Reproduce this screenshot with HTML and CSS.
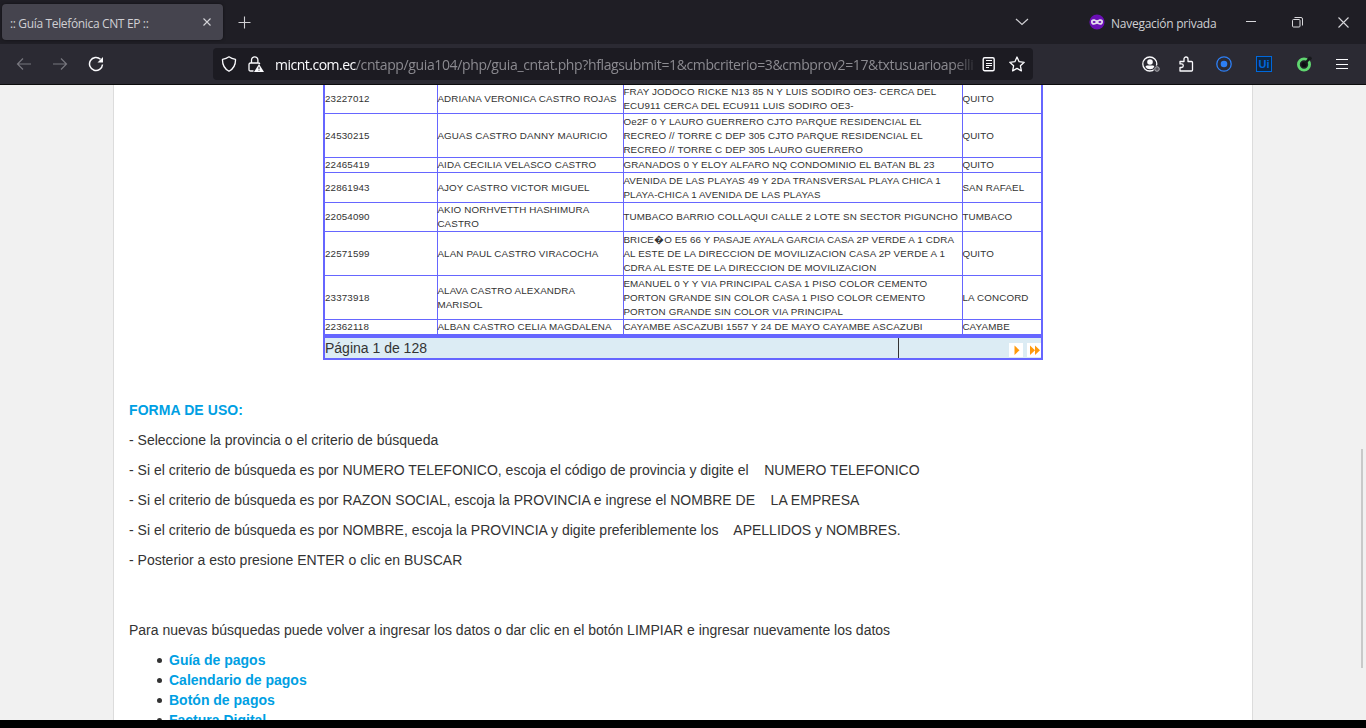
FILE: index.html
```html
<!DOCTYPE html>
<html lang="es">
<head>
<meta charset="utf-8">
<title>:: Guía Telefónica CNT EP ::</title>
<link rel="stylesheet" href="styles.css">
</head>
<body>
<header class="titlebar">
  <div class="tab"><span class="tab-title">:: Guía Telefónica CNT EP ::</span>
    <svg class="tab-close" width="10" height="10" viewBox="0 0 10 10"><path d="M1.500 1.500l7 7M8.500 1.500l-7 7" stroke="#d4d4d8" stroke-width="1.100" fill="none"/></svg>
  </div>
  <svg class="new-tab" width="13" height="13" viewBox="0 0 13 13"><path d="M6.500 .5v12M.5 6.500h12" stroke="#d0d0d4" stroke-width="1.100"/></svg>
  <svg class="all-tabs" width="14" height="8" viewBox="0 0 14 8"><path d="M1 1l6 5.500L13 1" stroke="#d0d0d4" stroke-width="1.200" fill="none"/></svg>
  <svg class="mask" width="16" height="16" viewBox="0 0 16 16"><circle cx="8" cy="8" r="7.600" fill="#6a0fb5"/><path d="M4.500 5.300c1.600 0 2.500.7 3.500 1 1-.3 1.900-1 3.500-1 1.800 0 2.600 1.200 2.500 2.600-.1 1.800-1.200 2.900-2.700 2.900-1.700 0-2.500-1-3.300-1s-1.600 1-3.300 1C3.200 10.800 2.100 9.700 2 7.900 1.900 6.500 2.700 5.300 4.500 5.300z" fill="#e4dcee"/><ellipse cx="5.100" cy="8" rx="1.500" ry="1" fill="#6a0fb5"/><ellipse cx="10.900" cy="8" rx="1.500" ry="1" fill="#6a0fb5"/></svg>
  <span class="private">Navegación privada</span>
  <div class="window-buttons">
    <svg width="10" height="10" viewBox="0 0 10 10"><path d="M0 4.500h10" stroke="#d8d8dc"/></svg>
    <svg width="11" height="11" viewBox="0 0 11 11"><rect x=".5" y="2.500" width="7.500" height="7.500" rx="1" fill="none" stroke="#d8d8dc"/><path d="M2.500.5H9q1.500 0 1.500 1.500v6.500" fill="none" stroke="#d8d8dc"/></svg>
    <svg width="11" height="11" viewBox="0 0 11 11"><path d="M.5.5l10 10M10.500.5l-10 10" stroke="#d8d8dc" stroke-width="1.100"/></svg>
  </div>
</header>
<nav class="toolbar">
  <div class="nav-buttons">
    <svg width="16" height="16" viewBox="0 0 16 16"><path d="M15 8H1.500M7 2.500L1.500 8 7 13.500" fill="none" stroke="#77767e" stroke-width="1.200"/></svg>
    <svg width="16" height="16" viewBox="0 0 16 16"><path d="M1 8h13.500M9 2.500L14.500 8 9 13.500" fill="none" stroke="#77767e" stroke-width="1.200"/></svg>
    <svg width="16" height="16" viewBox="0 0 16 16"><path d="M12.500 3.300A6.500 6.500 0 1 0 14.500 8.500" fill="none" stroke="#fbfbfe" stroke-width="1.500"/><path d="M15 1v5.500H9.500z" fill="#fbfbfe"/></svg>
  </div>
  <div class="urlbar">
    <svg class="shield" width="16" height="16" viewBox="0 0 16 16"><path d="M8 .8c2 1.500 4 2.200 6.500 2.600.2 5-1.300 9-6.500 11.900C2.800 12.400 1.300 8.400 1.500 3.400 4 3 6 2.300 8 .8z" fill="none" stroke="#fbfbfe" stroke-width="1.300" stroke-linejoin="round"/></svg>
    <svg class="lock" width="16" height="16" viewBox="0 0 16 16"><path d="M3.500 7V4a3.200 3.200 0 0 1 6.400 0v3M5.500 15H2.500q-1.500 0-1.500-1.500V8.500Q1 7 2.500 7h8q1 0 1.300 1" fill="none" stroke="#fbfbfe" stroke-width="1.300"/><path d="M11 8l5 8H6z" fill="#fbfbfe"/><path d="M11 10.800v2.200M11 13.700v1" stroke="#1c1b22"/></svg>
    <span class="url"><b>micnt.com.ec</b>/cntapp/guia104/php/guia_cntat.php?hflagsubmit=1&amp;cmbcriterio=3&amp;cmbprov2=17&amp;txtusuarioapelli</span>
    <svg class="reader" width="14" height="16" viewBox="0 0 14 16"><rect x="1.200" y="1.700" width="11" height="13" rx="1.500" fill="none" stroke="#fbfbfe" stroke-width="1.400"/><path d="M4 4.500h6M4 7.500h6M4 9.500h6M4 11.500h3" stroke="#fbfbfe"/></svg>
    <svg class="star" width="16" height="16" viewBox="0 0 16 16"><path d="M8 1l2.100 4.700 5.100.6-3.800 3.500 1 5.100L8 12.400l-4.400 2.500 1-5.100L.8 6.300l5.100-.6z" fill="none" stroke="#fbfbfe" stroke-width="1.300" stroke-linejoin="round"/></svg>
  </div>
  <div class="extensions">
    <svg class="account" width="18" height="16" viewBox="0 0 18 16"><circle cx="7.800" cy="8" r="7" fill="none" stroke="#fbfbfe" stroke-width="1.300"/><circle cx="8" cy="6" r="2.800" fill="#fbfbfe"/><path d="M3.500 11q0-1.500 1.500-1.500h6q1.500 0 1.500 1.500-1.500 2.300-4.500 2.300T3.500 11z" fill="#fbfbfe"/><circle cx="15" cy="13" r="3.500" fill="#2b2a33"/><circle cx="15" cy="13" r="2.300" fill="#55545c" stroke="#aaa9af"/></svg>
    <svg class="puzzle" width="16" height="16" viewBox="0 0 16 16"><path d="M2 5.500h4V3a2 2 0 0 1 4 0v2.500h3.500q1 0 1 1V14q0 1-1 1H2v-3.500h1.500a1.800 1.800 0 0 0 0-3.600H2z" fill="none" stroke="#fbfbfe" stroke-width="1.300" stroke-linejoin="round"/></svg>
    <svg width="16" height="16" viewBox="0 0 16 16"><circle cx="8" cy="8" r="7.200" fill="none" stroke="#2d7ff5" stroke-width="1.300"/><circle cx="8" cy="8" r="3.300" fill="#2d7ff5"/></svg>
    <span class="ui-badge">Ui</span>
    <svg width="16" height="16" viewBox="0 0 16 16"><circle cx="8" cy="8.500" r="5.600" fill="#202226" stroke="#60d670" stroke-width="2.800"/><circle cx="8" cy="8.500" r="2.600" fill="#0c0d10"/><path d="M9 7.500L13 3" stroke="#17191c" stroke-width="2.600"/><circle cx="13.800" cy="2.300" r="1.900" fill="#17191c"/></svg>
    <svg width="12" height="12" viewBox="0 0 12 12"><path d="M0 1.500h12M0 6.500h12M0 10.500h12" stroke="#fbfbfe" stroke-width="1.200"/></svg>
  </div>
</nav>
<main class="viewport">
  <div class="page">
    <div class="directory">
      <div class="row r28"><div>23227012</div><div>ADRIANA VERONICA CASTRO ROJAS</div><div>FRAY JODOCO RICKE N13 85 N Y LUIS SODIRO OE3- CERCA DEL<br>ECU911 CERCA DEL ECU911 LUIS SODIRO OE3-</div><div>QUITO</div></div>
      <div class="row r43"><div>24530215</div><div>AGUAS CASTRO DANNY MAURICIO</div><div>Oe2F 0 Y LAURO GUERRERO CJTO PARQUE RESIDENCIAL EL<br>RECREO // TORRE C DEP 305 CJTO PARQUE RESIDENCIAL EL<br>RECREO // TORRE C DEP 305 LAURO GUERRERO</div><div>QUITO</div></div>
      <div class="row r14"><div>22465419</div><div>AIDA CECILIA VELASCO CASTRO</div><div>GRANADOS 0 Y ELOY ALFARO NQ CONDOMINIO EL BATAN BL 23</div><div>QUITO</div></div>
      <div class="row r29"><div>22861943</div><div>AJOY CASTRO VICTOR MIGUEL</div><div>AVENIDA DE LAS PLAYAS 49 Y 2DA TRANSVERSAL PLAYA CHICA 1<br>PLAYA-CHICA 1 AVENIDA DE LAS PLAYAS</div><div>SAN RAFAEL</div></div>
      <div class="row r28"><div>22054090</div><div>AKIO NORHVETTH HASHIMURA<br>CASTRO</div><div>TUMBACO BARRIO COLLAQUI CALLE 2 LOTE SN SECTOR PIGUNCHO</div><div>TUMBACO</div></div>
      <div class="row r43"><div>22571599</div><div>ALAN PAUL CASTRO VIRACOCHA</div><div>BRICE&#xFFFD;O E5 66 Y PASAJE AYALA GARCIA CASA 2P VERDE A 1 CDRA<br>AL ESTE DE LA DIRECCION DE MOVILIZACION CASA 2P VERDE A 1<br>CDRA AL ESTE DE LA DIRECCION DE MOVILIZACION</div><div>QUITO</div></div>
      <div class="row r43"><div>23373918</div><div>ALAVA CASTRO ALEXANDRA<br>MARISOL</div><div>EMANUEL 0 Y Y VIA PRINCIPAL CASA 1 PISO COLOR CEMENTO<br>PORTON GRANDE SIN COLOR CASA 1 PISO COLOR CEMENTO<br>PORTON GRANDE SIN COLOR VIA PRINCIPAL</div><div>LA CONCORD</div></div>
      <div class="row r14"><div>22362118</div><div>ALBAN CASTRO CELIA MAGDALENA</div><div>CAYAMBE ASCAZUBI 1557 Y 24 DE MAYO CAYAMBE ASCAZUBI</div><div>CAYAMBE</div></div>
      <div class="pager">
        <div class="pager-label">Página 1 de 128</div>
        <div class="pager-links">
          <svg width="14" height="14" viewBox="0 0 14 14"><path fill="#fff" d="M0 0h14v14H0z"/><path d="M5.500 2.500l5 4.800-5 4.700z" fill="#ff9a0c"/></svg>
          <svg width="14" height="14" viewBox="0 0 14 14"><path fill="#fff" d="M0 0h14v14H0z"/><path d="M3 2.500l5 4.800L3 12zM8 2.500l5 4.800L8 12z" fill="#ff9a0c"/></svg>
        </div>
      </div>
    </div>
    <section class="help">
      <h2>FORMA DE USO:</h2>
      <p>- Seleccione la provincia o el criterio de búsqueda</p>
      <p>- Si el criterio de búsqueda es por NUMERO TELEFONICO, escoja el código de provincia y digite el &nbsp;&nbsp; NUMERO TELEFONICO</p>
      <p>- Si el criterio de búsqueda es por RAZON SOCIAL, escoja la PROVINCIA e ingrese el NOMBRE DE &nbsp;&nbsp; LA EMPRESA</p>
      <p>- Si el criterio de búsqueda es por NOMBRE, escoja la PROVINCIA y digite preferiblemente los &nbsp;&nbsp; APELLIDOS y NOMBRES.</p>
      <p>- Posterior a esto presione ENTER o clic en BUSCAR</p>
      <p class="again">Para nuevas búsquedas puede volver a ingresar los datos o dar clic en el botón LIMPIAR e ingresar nuevamente los datos</p>
      <ul>
        <li><a>Guía de pagos</a></li>
        <li><a>Calendario de pagos</a></li>
        <li><a>Botón de pagos</a></li>
        <li><a>Factura Digital</a></li>
      </ul>
    </section>
  </div>
  <div class="scroll-thumb"></div>
</main>
</body>
</html>
```
FILE: styles.css
```css
* { box-sizing: border-box; }
body { margin: 0; width: 1366px; height: 728px; overflow: hidden; background: #000; display: flex; flex-direction: column; font-family: "Liberation Sans", Arial, sans-serif; }
svg { display: block; flex: none; }

.titlebar { height: 44px; flex: none; background: #1f1e25; display: flex; align-items: center; font-family: "Open Sans", "Noto Sans", sans-serif; font-size: 12px; color: #d0d0d4; white-space: nowrap; }
.tab { width: 221px; height: 36px; margin-left: 2px; padding: 0 11px 0 8px; border-radius: 4px; background: #45444e; display: flex; align-items: center; justify-content: space-between; box-shadow: 0 0 3px rgba(0,0,0,.5); }
.tab-title { letter-spacing: -.35px; padding-top: 2px; }
.new-tab { margin-left: 15px; }
.all-tabs { margin-left: 764px; }
.mask { margin-left: 60px; }
.private { width: 107px; margin-left: 6px; padding-top: 2px; letter-spacing: -.26px; }
.window-buttons { margin-left: 28px; display: flex; align-items: center; gap: 35.500px; }

.toolbar { height: 41px; flex: none; background: #2b2a33; border-bottom: 1px solid #0c0c0d; display: flex; align-items: center; }
.nav-buttons { width: 213px; padding-left: 16px; display: flex; gap: 20px; }
.urlbar { width: 820px; height: 32px; border-radius: 4px; background: #1c1b22; padding-left: 8px; display: flex; align-items: center; }
.lock { margin-left: 11px; }
.url { width: 698px; margin-left: 11px; padding-top: 2px; overflow: hidden; white-space: nowrap; font: 14px/20px "Open Sans", "Noto Sans", sans-serif; color: #8b8a90; letter-spacing: -.37px; mask-image: linear-gradient(to right, #000 678px, transparent 704px); }
.url b { font-weight: 400; color: #fbfbfe; letter-spacing: -.5px; }
.reader { margin-left: 9px; }
.star { margin-left: 13px; }
.extensions { margin-left: 109px; display: flex; align-items: center; gap: 24px; }
.account { margin-right: -6px; }
.puzzle { margin-right: -2px; }
.ui-badge { width: 16px; height: 16px; border: 1px solid #0068dc; color: #0068dc; background: #102640; font: bold 11px/14px "Liberation Sans", sans-serif; text-align: center; }

.viewport { height: 635px; flex: none; position: relative; background: #f1f1f1; overflow: hidden; padding-left: 113px; }
.page { width: 1140px; height: 635px; background: #fff; border: solid #dcdcdc; border-width: 0 1px; color: #333; overflow: hidden; }
.directory { width: 720px; margin-left: 209px; border: 2px solid #6666ff; border-top: 0; }
.row { display: grid; grid-template-columns: 112px 186px 339px 79px; border-bottom: 1px solid #6666ff; font-size: 9.800px; letter-spacing: .14px; line-height: 14px; white-space: nowrap; box-sizing: content-box; }
.row > div { display: flex; flex-direction: column; justify-content: center; }
.row > div + div { box-shadow: inset 1px 0 #6666ff; padding-left: .4px; }
.r14 { height: 14px; }
.r28 { height: 28px; }
.r29 { height: 29px; }
.r43 { height: 43px; }
.pager { height: 23px; border-top: 3px solid #6666ff; background: #dcecf4; display: flex; font-size: 14px; line-height: 20px; }
.pager-label { width: 573px; }
.pager-links { flex: 1; border-left: 1px solid #333; display: flex; justify-content: flex-end; align-items: flex-end; gap: 4px; padding-bottom: 1px; }

.help { padding: 40px 15px 0; font-size: 14px; line-height: 20px; }
.help h2 { margin: 0 0 10px; font-size: 14px; line-height: 20px; letter-spacing: .08px; color: #009fe3; }
.help p { margin: 0 0 10px; white-space: nowrap; letter-spacing: .005px; }
.help .again { margin-top: 50px; letter-spacing: 0; }
.help ul { margin: 0; padding-left: 28px; list-style: none; }
.help li { display: flex; align-items: center; gap: 7px; }
.help li::before { content: ""; width: 5px; height: 5px; border-radius: 50%; background: #333; margin-top: 1px; }
.help a { color: #009fe3; font-weight: bold; }

.scroll-thumb { position: absolute; right: 3px; top: 364px; width: 2px; height: 219px; background: #c9c9c9; }
```
